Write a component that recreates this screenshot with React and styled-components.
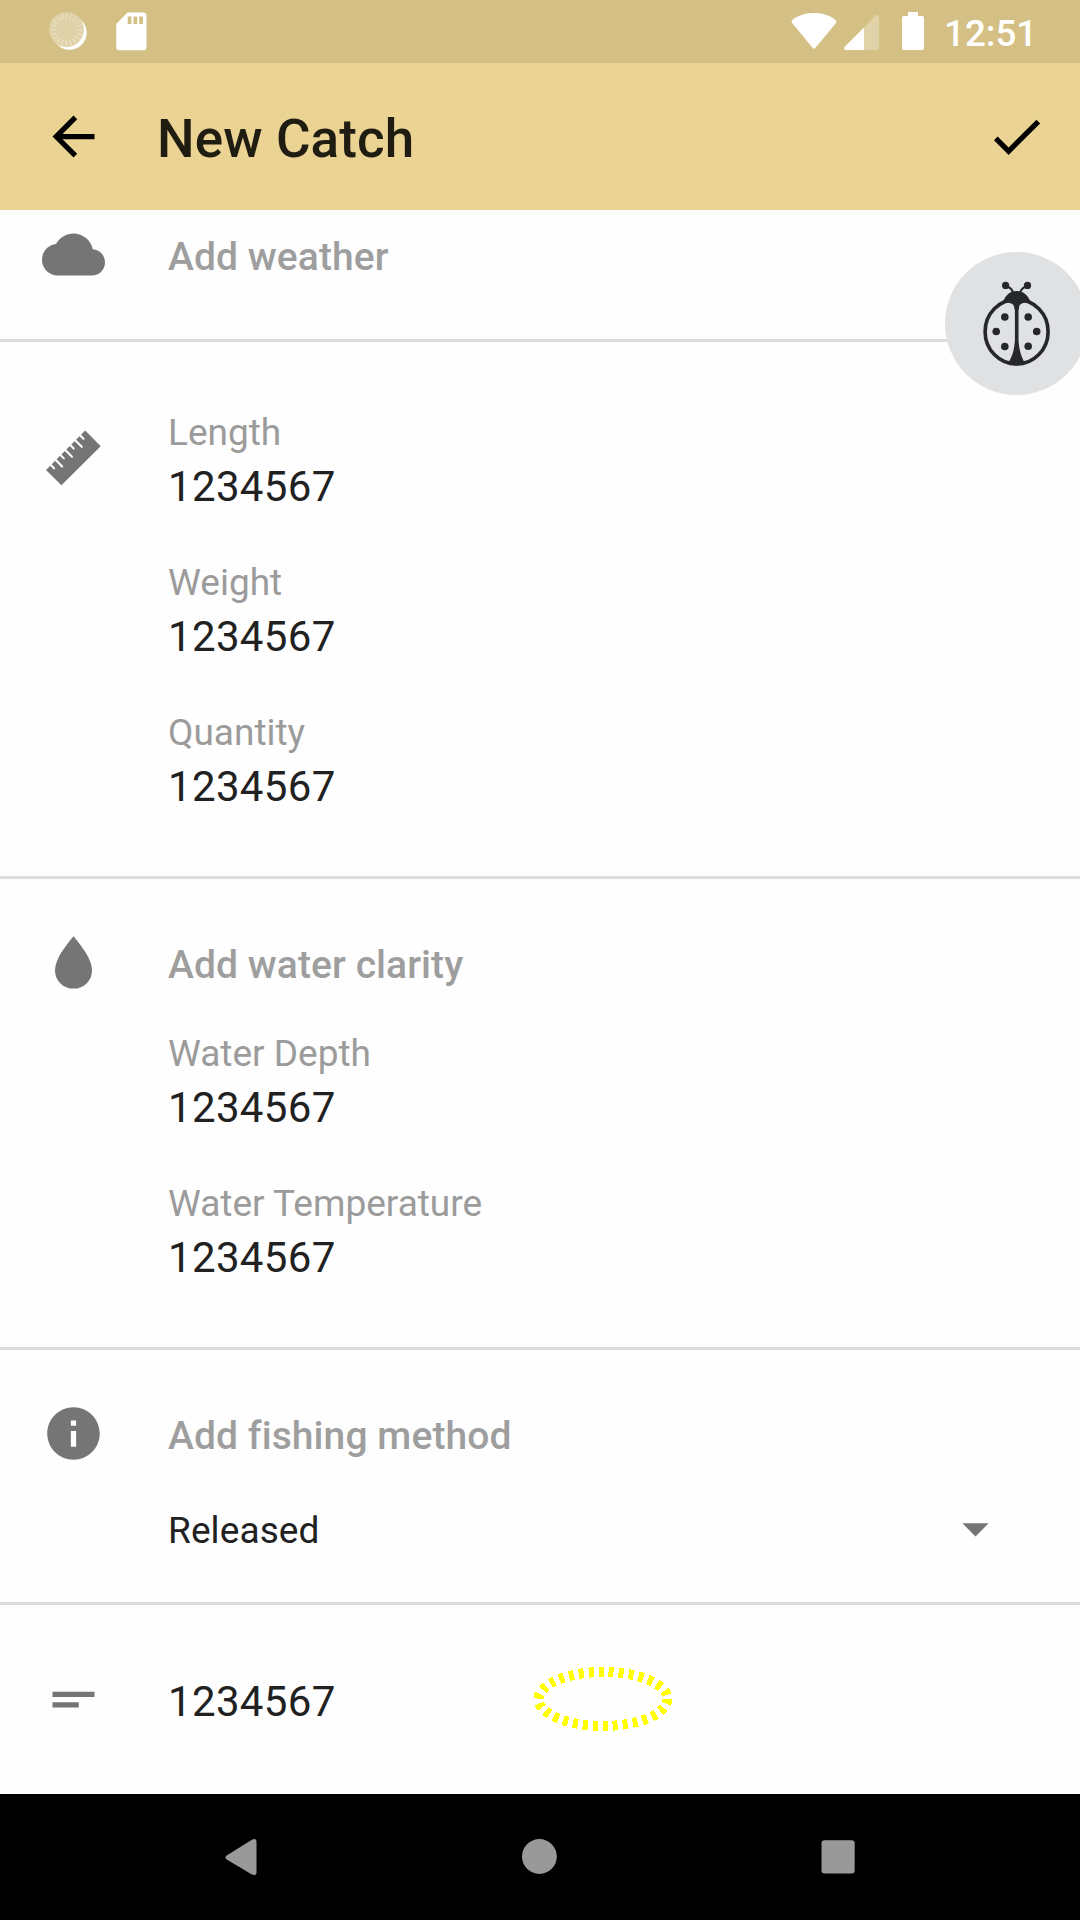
import React from "react";
import styled, { createGlobalStyle } from "styled-components";

const GlobalStyle = createGlobalStyle`
  *, *::before, *::after { box-sizing: border-box; }
  html, body { margin: 0; padding: 0; background: #fefefe; }
  body { font-family: Roboto, "Noto Sans", sans-serif; }
`;

const Screen = styled.div`
  position: relative;
  width: 1080px;
  height: 1920px;
  overflow: hidden;
  display: flex;
  flex-direction: column;
  background: #fefefe;
`;

const StatusBar = styled.div`
  flex: none;
  height: 63px;
  display: flex;
  justify-content: space-between;
  background: #d4c084;
`;

const StatusSvg = styled.svg`
  display: block;
  flex: none;
`;

const StatusRight = styled.div`
  display: flex;
  padding-right: 43px;
`;

const Clock = styled.span`
  width: 93px;
  font-size: 36.75px;
  font-weight: 500;
  line-height: 44px;
  padding-top: 12px;
  color: #fff;
  white-space: nowrap;
`;

const AppBar = styled.header`
  flex: none;
  height: 147px;
  display: flex;
  align-items: center;
  padding: 0 32px 0 42px;
  background: #ebd394;
`;

const Title = styled.h1`
  flex: 1;
  margin: 0;
  padding: 4px 0 0 52px;
  font-size: 53px;
  font-weight: 500;
  line-height: 62px;
  letter-spacing: 0.1px;
  color: #1f1c12;
`;

const Icon = styled.svg`
  display: block;
  flex: none;
  width: 63px;
  height: 63px;
  fill: ${(p) => p.$color || "#757575"};
`;

const Content = styled.main`
  flex: 1;
  display: flex;
  flex-direction: column;
`;

const Section = styled.section`
  flex: none;
  display: flex;
  height: ${(p) => p.$height}px;
  border-bottom: ${(p) => (p.$last ? "none" : "3px solid #dcdcdc")};
`;

const IconColumn = styled.div`
  flex: none;
  width: 168px;
  padding: ${(p) => p.$top}px 0 0 42px;
`;

const Body = styled.div`
  flex: 1;
  display: flex;
  flex-direction: column;
  padding: ${(p) => p.$top}px 73px 0 0;
`;

const Heading = styled.div`
  font-size: 39px;
  font-weight: 500;
  line-height: 48px;
  letter-spacing: 0.08px;
  font-variant-ligatures: common-ligatures;
  color: #9e9e9e;
`;

const Fields = styled.div`
  display: flex;
  flex-direction: column;
  gap: 49px;
  margin-top: ${(p) => p.$top || 0}px;
`;

const FieldBox = styled.div`
  display: flex;
  flex-direction: column;
  gap: 7px;
`;

const Label = styled.div`
  font-size: 37px;
  line-height: 44px;
  color: #9b9b9b;
`;

const Value = styled.div`
  font-size: 42px;
  line-height: 50px;
  letter-spacing: 0.35px;
  color: #212121;
`;

const SelectRow = styled.div`
  display: flex;
  align-items: center;
  justify-content: space-between;
  height: 63px;
  margin-top: 37px;
  font-size: 37px;
  line-height: 44px;
  color: #212121;
`;

const Selected = styled.span`
  padding-top: 5px;
  letter-spacing: 0.1px;
`;

const NavBar = styled.nav`
  flex: none;
  height: 126px;
  display: flex;
  justify-content: center;
  background: #000;
`;

const BugButton = styled.div`
  position: absolute;
  left: 945px;
  top: 252px;
  width: 143px;
  height: 143px;
  border-radius: 50%;
  background: #e0e1e3;
`;

const Marker = styled.svg`
  position: absolute;
  left: 530px;
  top: 1660px;
`;

const ICONS = {
  back: "M20 11H7.83l5.59-5.59L12 4l-8 8 8 8 1.41-1.41L7.83 13H20v-2z",
  check: "M9 16.17L4.83 12l-1.42 1.41L9 19 21 7l-1.41-1.41z",
  cloud:
    "M19.35 10.04C18.67 6.59 15.64 4 12 4 9.11 4 6.6 5.64 5.35 8.04 2.34 8.36 0 10.91 0 14c0 3.31 2.69 6 6 6h13c2.76 0 5-2.24 5-5 0-2.64-2.05-4.78-4.65-4.96z",
  drop: "M12 2C9.2 5.4 4.95 10.6 4.95 15C4.95 18.9 8.1 21.95 12 21.95S19.05 18.9 19.05 15C19.05 10.6 14.8 5.4 12 2z",
  info: "M12 2C6.48 2 2 6.48 2 12s4.48 10 10 10 10-4.48 10-10S17.52 2 12 2zm1 15h-2v-6h2v6zm0-8h-2V7h2v2z",
  notes: "M4 9h16v2H4zM4 13h10v2H4z",
  down: "M7 10l5 5 5-5z",
};

const Glyph = ({ name, color }) => (
  <Icon viewBox="0 0 24 24" $color={color}>
    <path d={ICONS[name]} />
  </Icon>
);

const notches = [1, 2, 3, 4, 5, 6, 7].map((i) => {
  const x = 4 + 4.9 * i;
  const y = 43.9 - 4.91 * i;
  const depth = i % 2 ? 3.2 : 6.4;
  return `M${x - 2} ${y - 2}L${x + depth} ${y + depth}`;
});

const Ruler = () => (
  <Icon viewBox="0 0 63 63">
    <path d="M4 43.900L43.200 4.600L58.700 20.300L19.400 59.300z" />
    <path d={notches.join("")} fill="none" stroke="#fefefe" strokeWidth="2.100" strokeLinecap="round" />
  </Icon>
);

const Field = ({ label, value }) => (
  <FieldBox>
    <Label>{label}</Label>
    <Value>{value}</Value>
  </FieldBox>
);

const ticks = Array.from({ length: 20 }, (_, i) => i * 18);

const Ladybug = () => (
  <svg width="143" height="143" viewBox="945 252 143 143" fill="#25272b">
    <ellipse cx="1016.6" cy="331.7" rx="31.5" ry="32.3" fill="none" stroke="#25272b" strokeWidth="3.6" />
    <path d="M1003 303C1004.500 295.500 1010 291 1016.600 291S1029 295.500 1030.500 303C1026 302 1021 303 1019.500 305.500L1018.500 310H1014.800L1013.800 305.500C1012 303 1007 302 1003 303z" />
    <path d="M1014.900 303H1018.500V340C1019 350 1021.500 357 1024.500 362.500C1020 366.500 1013 366.500 1008.500 362.500C1012 357 1014.400 350 1014.900 340z" />
    <path
      d="M1006.500 286.500Q1011.500 287.500 1013 292.500M1026.700 286.500Q1021.700 287.500 1020.200 292.500"
      fill="none"
      stroke="#25272b"
      strokeWidth="2.200"
    />
    <circle cx="1005.600" cy="285.400" r="3.600" />
    <circle cx="1027.500" cy="285.400" r="3.600" />
    <circle cx="1004.800" cy="317" r="3.800" />
    <circle cx="1028.200" cy="317" r="3.800" />
    <circle cx="996.200" cy="331.500" r="3.800" />
    <circle cx="1036.700" cy="331.500" r="3.800" />
    <circle cx="1004.800" cy="346.500" r="3.800" />
    <circle cx="1028.200" cy="346.200" r="3.800" />
  </svg>
);

export default function App() {
  return (
    <>
      <GlobalStyle />
      <Screen>
        <StatusBar>
          <StatusSvg width="160" height="63">
            <circle cx="69.500" cy="32.600" r="17.200" fill="#fff" />
            <circle cx="66.500" cy="29.600" r="17.400" fill="#e0d2a8" />
            {ticks.map((a) => (
              <rect
                key={a}
                x="65.900"
                y="13.800"
                width="1.300"
                height="5.400"
                fill="#e9dfc2"
                transform={`rotate(${a} 66.500 29.800)`}
              />
            ))}
            <path
              fill="#fff"
              fillRule="evenodd"
              d="M127.500 12.500H143.500a3 3 0 0 1 3 3V47.300a3 3 0 0 1-3 3H119.200a3 3 0 0 1-3-3V24zM127.700 16.500v7.500h3.700v-7.500zM133.500 16.500v7.500h3.700v-7.500zM139.200 16.500v7.500h3.700v-7.500z"
            />
          </StatusSvg>
          <StatusRight>
            <StatusSvg width="154" height="63" viewBox="790 0 154 63">
              <path
                fill="#fff"
                d="M791.800 20.500C797 15.500 805 13 814 13S831 15.500 836 20.500Q837 21.700 836 23L815.500 47.800Q814 49.600 812.500 47.800L792.200 23Q791 21.700 791.800 20.500z"
              />
              <path fill="#fff" fillOpacity=".3" d="M864 27.500L875.500 15.600Q879 13.500 879 17V47.500Q879 50 876.500 50H864z" />
              <path fill="#fff" d="M864 27.500V50H845.500Q843.300 49.500 844.500 47z" />
              <path
                fill="#fff"
                d="M908 12h10v4h4.300q1.700 0 1.700 1.700v30.600q0 1.700-1.700 1.700h-18.600q-1.700 0-1.700-1.700v-30.600q0-1.700 1.700-1.700H908z"
              />
            </StatusSvg>
            <Clock>12:51</Clock>
          </StatusRight>
        </StatusBar>

        <AppBar>
          <Glyph name="back" color="#000" />
          <Title>New Catch</Title>
          <Glyph name="check" color="#000" />
        </AppBar>

        <Content>
          <Section $height={132}>
            <IconColumn $top={13}>
              <Glyph name="cloud" />
            </IconColumn>
            <Body $top={23}>
              <Heading>Add weather</Heading>
            </Body>
          </Section>

          <Section $height={537}>
            <IconColumn $top={84}>
              <Ruler />
            </IconColumn>
            <Body $top={69}>
              <Fields>
                <Field label="Length" value="1234567" />
                <Field label="Weight" value="1234567" />
                <Field label="Quantity" value="1234567" />
              </Fields>
            </Body>
          </Section>

          <Section $height={471}>
            <IconColumn $top={52}>
              <Glyph name="drop" />
            </IconColumn>
            <Body $top={62}>
              <Heading>Add water clarity</Heading>
              <Fields $top={43}>
                <Field label="Water Depth" value="1234567" />
                <Field label="Water Temperature" value="1234567" />
              </Fields>
            </Body>
          </Section>

          <Section $height={255}>
            <IconColumn $top={52}>
              <Glyph name="info" />
            </IconColumn>
            <Body $top={62}>
              <Heading>Add fishing method</Heading>
              <SelectRow>
                <Selected>Released</Selected>
                <Glyph name="down" />
              </SelectRow>
            </Body>
          </Section>

          <Section $height={189} $last>
            <IconColumn $top={63}>
              <Glyph name="notes" />
            </IconColumn>
            <Body $top={72}>
              <Value>1234567</Value>
            </Body>
          </Section>
        </Content>

        <NavBar>
          <svg width="1080" height="126" viewBox="0 1794 1080 126" fill="#999">
            <path d="M226.700 1855.500L251.500 1840Q256.500 1837.500 256.500 1842V1872.500Q256.500 1876.500 251.500 1874.300L226.700 1859.500Q224.200 1857.500 226.700 1855.500z" />
            <circle cx="539.400" cy="1856.500" r="17.400" />
            <rect x="821.500" y="1840.300" width="33.200" height="33.300" rx="3" />
          </svg>
        </NavBar>

        <BugButton>
          <Ladybug />
        </BugButton>
        <Marker width="146" height="78" viewBox="530 1660 146 78">
          <ellipse
            cx="603"
            cy="1699"
            rx="64.500"
            ry="27"
            fill="none"
            stroke="#ff0"
            strokeWidth="10"
            strokeDasharray="5 5"
            shapeRendering="crispEdges"
          />
        </Marker>
      </Screen>
    </>
  );
}
